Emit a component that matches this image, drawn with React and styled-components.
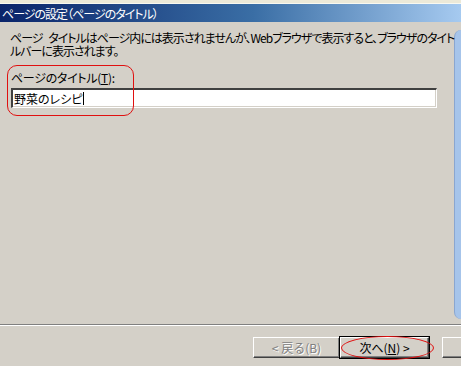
import React from "react";
import styled, { createGlobalStyle } from "styled-components";

const GlobalStyle = createGlobalStyle`
  html, body {
    margin: 0;
    padding: 0;
    background: #d4d0c8;
  }
  body {
    font-family: "Noto Sans CJK JP", "Liberation Sans", sans-serif;
    font-size: 12px;
    font-feature-settings: "palt";
  }
`;

const Window = styled.div`
  position: relative;
  width: 461px;
  height: 366px;
  overflow: hidden;
  background: #d4d0c8;
  display: flex;
  flex-direction: column;
`;

const TopStrip = styled.div`
  height: 3px;
  background: #ece9d8;
  border-bottom: 1px solid #f8f8f0;
`;

const TitleBar = styled.div`
  height: 18px;
  display: flex;
  align-items: center;
  padding-left: 2px;
  color: #fff;
  font-size: 12px;
  letter-spacing: -1px;
  background: linear-gradient(to right, #0a246a 0%, #3a6ea5 55%, #a6caf0 100%);
`;

const Body = styled.div`
  flex: 1;
  display: flex;
`;

const Content = styled.div`
  flex: 1;
  display: flex;
  flex-direction: column;
`;

const Main = styled.div`
  position: relative;
  flex: 1;
  padding: 9px 0 0 10px;
`;

const Description = styled.p`
  margin: 0;
  line-height: 13px;
  color: #000;
  font-size: 12px;
  letter-spacing: -1px;
  word-spacing: 4px;
  white-space: nowrap;
`;

const Field = styled.div`
  margin-top: 14px;
  display: flex;
  flex-direction: column;
  gap: 3px;
`;

const Label = styled.label`
  line-height: 14px;
  margin-left: 1px;
  letter-spacing: -0.3px;
  u {
    text-decoration: underline;
  }
`;

const TextBox = styled.div`
  width: 422px;
  height: 17px;
  margin-left: 1px;
  background: #fff;
  border-top: 2px solid #404040;
  border-left: 2px solid #404040;
  border-right: 1px solid #fff;
  border-bottom: 1px solid #fff;
  box-shadow: 1px 1px 0 #d4d0c8, inset -1px -1px 0 #d4d0c8;
  display: flex;
  align-items: center;
  padding-left: 1px;
  font-size: 12px;
`;

const Caret = styled.span`
  display: inline-block;
  width: 1px;
  height: 13px;
  background: #000;
  margin-left: 1px;
`;

const Ring = styled.div`
  position: absolute;
  border: 1px solid #e01010;
  border-radius: ${(p) => p.$radius};
  left: ${(p) => p.$x}px;
  top: ${(p) => p.$y}px;
  width: ${(p) => p.$w}px;
  height: ${(p) => p.$h}px;
  pointer-events: none;
`;

const SidePanel = styled.div`
  width: 8px;
  margin: 8px 0 5px;
  background: #a6c4ea;
  border-left: 1px solid #8aa6d0;
  border-radius: 10px 0 0 10px;
`;

const Footer = styled.div`
  position: relative;
  height: 42px;
  border-top: 1px solid #808080;
  box-shadow: inset 0 1px 0 #fff;
  display: flex;
  justify-content: flex-end;
  padding-top: 12px;
  box-sizing: border-box;
`;

const ButtonRow = styled.div`
  display: flex;
  flex-shrink: 0;
  margin-right: -68px;
`;

const Button = styled.button`
  flex-shrink: 0;
  width: ${(p) => (p.$default ? 89 : 87)}px;
  height: 21px;
  margin-right: ${(p) => (p.$default ? 13 : 0)}px;
  padding: 0;
  background: #d4d0c8;
  font-family: inherit;
  font-size: 12px;
  color: ${(p) => (p.disabled ? "#808080" : "#000")};
  text-shadow: ${(p) => (p.disabled ? "1px 1px 0 #fff" : "none")};
  border: 1px solid;
  border-color: #fff #404040 #404040 #fff;
  box-shadow: inset -1px -1px 0 #808080;
  outline: ${(p) => (p.$default ? "1px solid #000" : "none")};
  outline-offset: 0;
  display: flex;
  align-items: center;
  justify-content: center;
  u {
    text-decoration: underline;
  }
`;

export default function App() {
  return (
    <>
      <GlobalStyle />
      <Window>
        <TopStrip />
        <TitleBar>ページの設定（ページのタイトル）</TitleBar>
        <Body>
          <Content>
            <Main>
              <Description>
                ページ タイトルはページ内には表示されませんが、Webブラウザで表示すると、ブラウザのタイト
                <br />
                ルバーに表示されます。
              </Description>
              <Field>
                <Label>
                  ページのタイトル(<u>T</u>):
                </Label>
                <TextBox>
                  野菜のレシピ
                  <Caret />
                </TextBox>
              </Field>
              <Ring $x={7} $y={43} $w={125} $h={49} $radius="10px" />
            </Main>
          </Content>
          <SidePanel />
        </Body>
        <Footer>
          <ButtonRow>
            <Button disabled>&lt; 戻る(B)</Button>
            <Button $default>
              次へ(<u>N</u>)&nbsp;&gt;
            </Button>
            <Button />
          </ButtonRow>
          <Ring $x={341} $y={11} $w={91} $h={22} $radius="50%" />
        </Footer>
      </Window>
    </>
  );
}
